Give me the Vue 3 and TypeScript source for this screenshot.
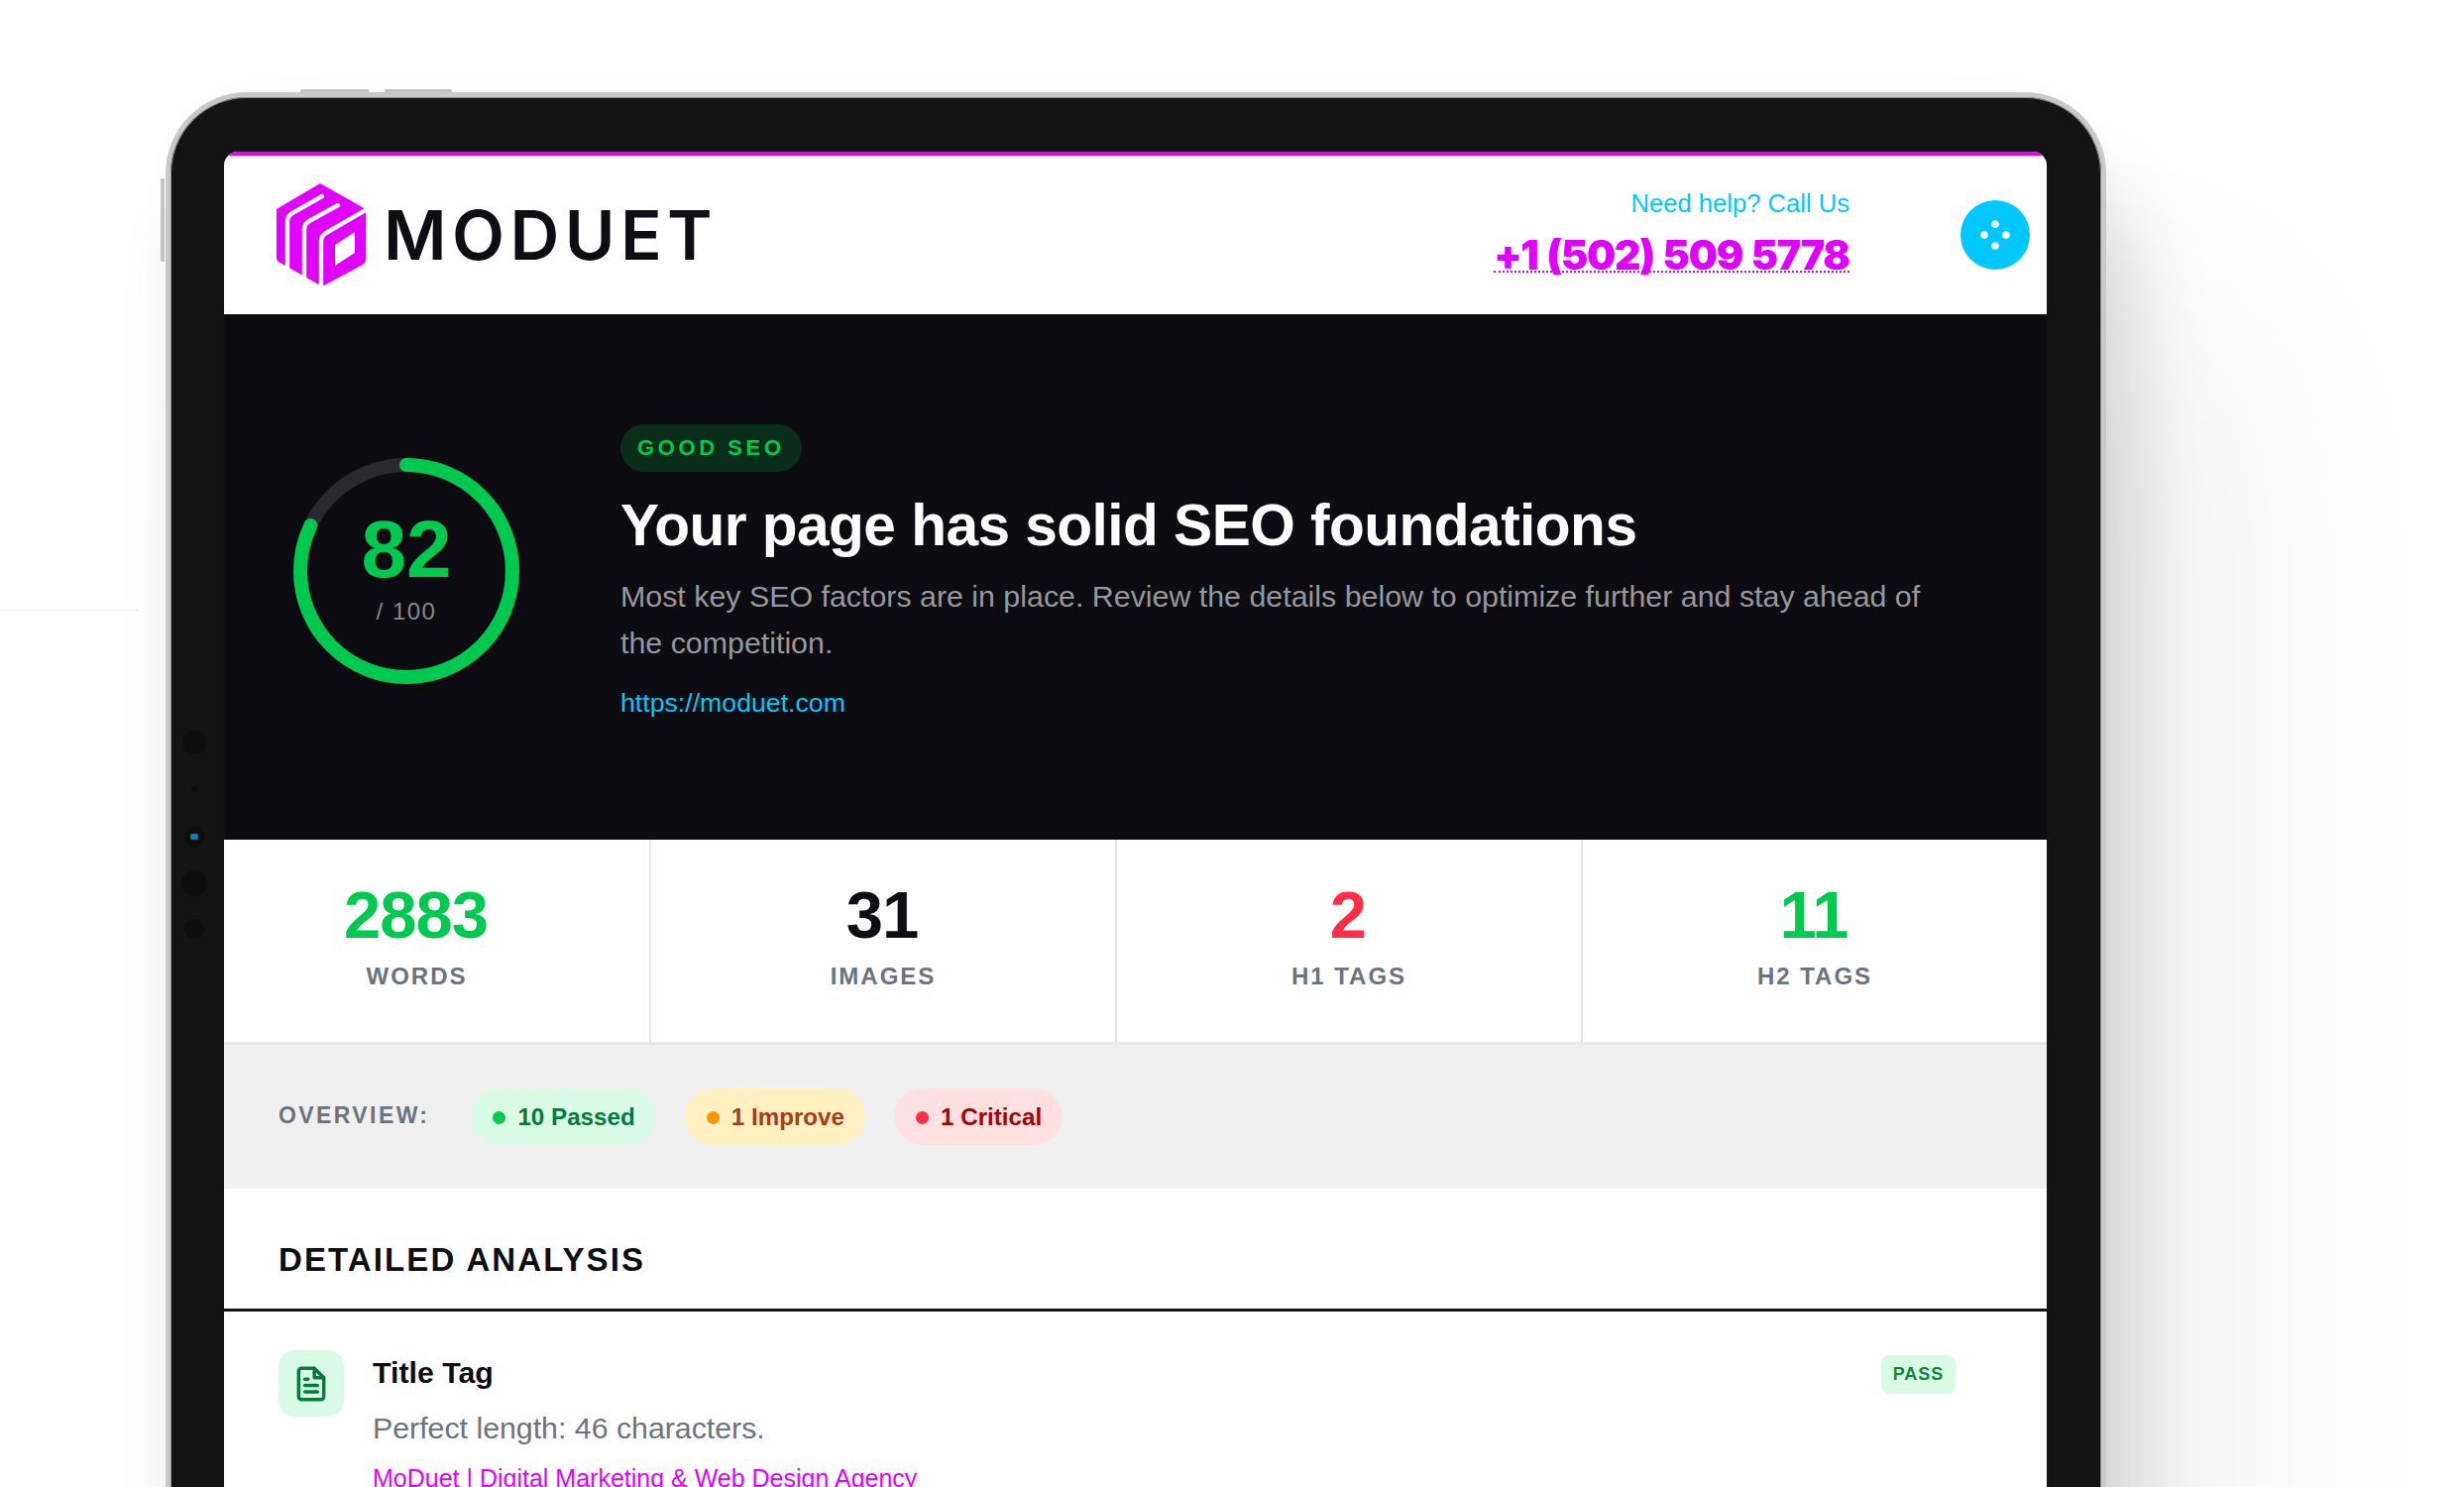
<template>
  <div class="page">
    <div class="rule"></div>
    <div class="device">
      <span class="btn-top btn-top--a"></span>
      <span class="btn-top btn-top--b"></span>
      <span class="btn-side"></span>
      <div class="sensors">
        <span class="sensor sensor--a"></span>
        <span class="sensor sensor--b"></span>
        <span class="sensor sensor--c"><i></i></span>
        <span class="sensor sensor--d"></span>
        <span class="sensor sensor--e"></span>
      </div>

      <div class="screen">
        <header class="topbar">
          <div class="brand">
            <svg class="brand__mark" viewBox="0 0 92 104">
              <path fill="#e100ff" d="M45 0 L91 26 L91 77 Q91 80 88 82 L47 104 L3 79 Q1 78 1 75 L1 26 Z" />
              <g fill="none" stroke="#fff" stroke-width="4.4" stroke-linecap="round" stroke-linejoin="round">
                <path d="M12 92 L12 38 Q12 33 17 30 L47 13" />
                <path d="M29 104 L29 46 Q29 41 34 38 L63 22" />
                <path d="M46 110 L46 58 Q46 53 51 50 L96 24" />
              </g>
              <path fill="#fff" d="M60 62 L80 49 L80 70 L60 83 Z" />
            </svg>
            <span class="brand__name">MODUET</span>
          </div>
          <div class="topbar__right">
            <div class="contact">
              <span class="contact__label">Need help? Call Us</span>
              <a class="contact__phone">+1 (502) 509 5778</a>
            </div>
            <div class="menu-dot">
              <svg viewBox="0 0 30 30" width="30" height="30" fill="#fff">
                <circle cx="15" cy="4" r="3.8" />
                <circle cx="4" cy="15" r="3.8" />
                <circle cx="26" cy="15" r="3.8" />
                <circle cx="15" cy="26" r="3.8" />
              </svg>
            </div>
          </div>
        </header>

        <section class="hero">
          <div class="gauge">
            <svg viewBox="0 0 228 228" width="228" height="228">
              <circle cx="114" cy="114" :r="radius" fill="none" stroke="#2a2a2e" stroke-width="14" />
              <circle
                cx="114"
                cy="114"
                :r="radius"
                fill="none"
                stroke="#00c94f"
                stroke-width="14"
                stroke-linecap="round"
                :stroke-dasharray="dash"
                transform="rotate(-90 114 114)"
              />
            </svg>
            <div class="gauge__text">
              <span class="gauge__score">{{ score }}</span>
              <span class="gauge__max">/ 100</span>
            </div>
          </div>
          <div class="hero__copy">
            <span class="hero__badge">GOOD SEO</span>
            <h1 class="hero__title">Your page has solid SEO foundations</h1>
            <p class="hero__desc">
              Most key SEO factors are in place. Review the details below to optimize further and stay ahead of the competition.
            </p>
            <a class="hero__url">https://moduet.com</a>
          </div>
        </section>

        <section class="stats">
          <div v-for="s in stats" :key="s.label" class="stat">
            <span class="stat__value" :class="'stat__value--' + s.tone">{{ s.value }}</span>
            <span class="stat__label">{{ s.label }}</span>
          </div>
        </section>

        <section class="overview">
          <span class="overview__label">OVERVIEW:</span>
          <span class="pill pill--pass"><i></i>10 Passed</span>
          <span class="pill pill--warn"><i></i>1 Improve</span>
          <span class="pill pill--crit"><i></i>1 Critical</span>
        </section>

        <h2 class="section-title">DETAILED ANALYSIS</h2>

        <div class="item">
          <div class="item__icon">
            <svg viewBox="0 0 24 24" width="38" height="38" fill="none" stroke="#067a3a" stroke-width="2.2" stroke-linecap="round" stroke-linejoin="round">
              <path d="M14 2H6a2 2 0 0 0-2 2v16a2 2 0 0 0 2 2h12a2 2 0 0 0 2-2V8z" />
              <path d="M14 2v6h6" />
              <path d="M16 13H8" />
              <path d="M16 17H8" />
              <path d="M10 9H8" />
            </svg>
          </div>
          <div class="item__body">
            <h3 class="item__title">Title Tag</h3>
            <p class="item__text">Perfect length: 46 characters.</p>
            <a class="item__link">MoDuet | Digital Marketing &amp; Web Design Agency</a>
          </div>
          <span class="item__tag">PASS</span>
        </div>
      </div>
    </div>
  </div>
</template>

<script setup lang="ts">
const score = 82
const radius = 107
const circumference = 2 * Math.PI * radius
const dash = `${circumference * (score / 100)} ${circumference}`

const stats = [
  { value: '2883', label: 'WORDS', tone: 'good' },
  { value: '31', label: 'IMAGES', tone: 'plain' },
  { value: '2', label: 'H1 TAGS', tone: 'bad' },
  { value: '11', label: 'H2 TAGS', tone: 'good' },
]
</script>

<style>
html,
body {
  margin: 0;
  overflow: hidden;
  background: #fff;
}
</style>

<style scoped>
.page {
  position: relative;
  height: 1500px;
  overflow: hidden;
  padding: 93px 0 0 167px;
  box-sizing: border-box;
  background: #fff;
  font-family: "Liberation Sans", Arial, sans-serif;
}

.rule {
  position: absolute;
  left: 0;
  top: 615px;
  width: 140px;
  height: 1px;
  background: #eee;
}

.device {
  position: relative;
  width: 1958px;
  height: 1600px;
  box-sizing: border-box;
  padding: 55px 55px 0 54px;
  background: #141414;
  border: 5px solid #c9c9cb;
  border-radius: 82px;
  box-shadow: inset 0 0 0 1px #8e8e90, 30px 90px 80px rgba(0, 0, 0, 0.13), 140px 220px 220px rgba(0, 0, 0, 0.06), 0 0 90px rgba(0, 0, 0, 0.012);
}

.btn-top {
  position: absolute;
  top: -8px;
  height: 3px;
  background: #c0c0c2;
  border-radius: 2px 2px 0 0;
}

.btn-top--a {
  left: 131px;
  width: 69px;
}

.btn-top--b {
  left: 216px;
  width: 68px;
}

.btn-side {
  position: absolute;
  left: -10px;
  top: 82px;
  width: 4px;
  height: 84px;
  background: #c4c4c6;
  border-radius: 2px 0 0 2px;
}

.sensors {
  position: absolute;
  left: 24px;
  top: 651px;
  width: 0;
}

.sensor {
  position: absolute;
  display: block;
  border-radius: 50%;
  background: #0e0e0e;
  transform: translate(-50%, -50%);
}

.sensor--a {
  top: 0;
  width: 24px;
  height: 24px;
}

.sensor--b {
  top: 47px;
  width: 6px;
  height: 6px;
}

.sensor--c {
  top: 95px;
  width: 20px;
  height: 20px;
  display: flex;
  align-items: center;
  justify-content: center;
}

.sensor--c i {
  width: 8px;
  height: 6px;
  background: #0f7fb0;
  border-radius: 2px;
}

.sensor--d {
  top: 142px;
  width: 26px;
  height: 26px;
}

.sensor--e {
  top: 188px;
  width: 20px;
  height: 20px;
}

.screen {
  background: #fff;
  border-radius: 14px 14px 0 0;
  overflow: hidden;
  height: 1400px;
}

.topbar {
  display: flex;
  align-items: center;
  justify-content: space-between;
  height: 164px;
  box-sizing: border-box;
  border-top: 4px solid #e100ff;
  padding: 0 17px 0 52px;
}

.brand {
  display: flex;
  align-items: center;
  gap: 17px;
}

.brand__mark {
  width: 92px;
  height: 104px;
  display: block;
}

.brand__name {
  font-family: Inter, "Liberation Sans", sans-serif;
  font-size: 69px;
  font-weight: 600;
  letter-spacing: 5.4px;
  line-height: 1;
  color: #0d0d14;
}

.topbar__right {
  display: flex;
  align-items: center;
  gap: 112px;
}

.contact {
  display: flex;
  flex-direction: column;
  align-items: flex-end;
  gap: 18px;
  margin-top: -12px;
}

.contact__label {
  font-size: 25.6px;
  line-height: 36px;
  color: #00c8ff;
}

.contact__phone {
  font-family: Inter, "Liberation Sans", sans-serif;
  font-size: 41px;
  font-weight: 900;
  line-height: 32px;
  letter-spacing: -1.2px;
  word-spacing: 1.6px;
  color: #e100ff;
  border-bottom: 2px dotted #e100ff;
}

.menu-dot {
  width: 70px;
  height: 70px;
  border-radius: 50%;
  background: #00c8ff;
  display: flex;
  align-items: center;
  justify-content: center;
}

.hero {
  display: flex;
  align-items: center;
  gap: 102px;
  height: 530px;
  box-sizing: border-box;
  padding: 0 70px 12px;
  background: #0c0c12;
}

.gauge {
  position: relative;
  width: 228px;
  height: 228px;
  flex: none;
}

.gauge svg {
  display: block;
}

.gauge__text {
  position: absolute;
  inset: 0;
  display: flex;
  flex-direction: column;
  align-items: center;
  justify-content: center;
}

.gauge__score {
  font-size: 82px;
  font-weight: 700;
  line-height: 80px;
  color: #00c94f;
  margin-top: -8px;
}

.gauge__max {
  font-size: 24px;
  line-height: 28px;
  letter-spacing: 1.5px;
  color: #88888c;
  margin-top: 9px;
}

.hero__copy {
  display: flex;
  flex-direction: column;
  align-items: flex-start;
}

.hero__badge {
  box-sizing: border-box;
  height: 48px;
  padding: 0 17px;
  border-radius: 24px;
  background: #0a2e1b;
  color: #00c94f;
  font-size: 22px;
  font-weight: 700;
  line-height: 48px;
  letter-spacing: 3.6px;
}

.hero__title {
  margin: 18px 0 0;
  font-size: 58.67px;
  font-weight: 700;
  line-height: 72px;
  letter-spacing: -0.56px;
  color: #fff;
}

.hero__desc {
  margin: 12px 0 0;
  font-size: 30.37px;
  line-height: 47.5px;
  color: #98989c;
  max-width: 1340px;
}

.hero__url {
  margin-top: 20px;
  font-size: 26.7px;
  line-height: 32px;
  color: #00c8ff;
}

.stats {
  display: grid;
  grid-template-columns: 431px 470px 470px 1fr;
  height: 207px;
  box-sizing: border-box;
  border-bottom: 3px solid #e6e6ea;
}

.stat {
  display: flex;
  flex-direction: column;
  align-items: center;
  justify-content: center;
  border-right: 2px solid #e6e6ea;
}

.stat:first-child {
  padding-right: 40px;
}

.stat:last-child {
  border-right: 0;
}

.stat__value {
  font-size: 67px;
  font-weight: 700;
  line-height: 74px;
  letter-spacing: -1px;
  margin: -13.5px 0 0 -2px;
}

.stat__value--good {
  color: #00c94f;
}

.stat__value--plain {
  color: #0d0d14;
}

.stat__value--bad {
  color: #ff2d46;
}

.stat__label {
  margin-top: 11.5px;
  font-size: 24px;
  font-weight: 700;
  line-height: 28px;
  letter-spacing: 2px;
  color: #6b7280;
}

.overview {
  display: flex;
  align-items: center;
  height: 145px;
  box-sizing: border-box;
  padding-left: 55px;
  background: #efefef;
}

.overview__label {
  font-size: 23px;
  font-weight: 700;
  letter-spacing: 2.4px;
  color: #6b7280;
  margin-right: 42px;
  margin-top: -3px;
}

.pill {
  display: flex;
  align-items: center;
  gap: 12px;
  height: 57px;
  box-sizing: border-box;
  padding: 1px 21px 0 22px;
  margin-right: 29px;
  border-radius: 29px;
  font-size: 24.2px;
  font-weight: 700;
}

.pill i {
  width: 13px;
  height: 13px;
  border-radius: 50%;
}

.pill--pass {
  background: #d9fbe6;
  color: #067a3a;
}

.pill--pass i {
  background: #00c94f;
}

.pill--warn {
  background: #fff0c2;
  color: #a33f14;
}

.pill--warn i {
  background: #ff9800;
}

.pill--crit {
  background: #ffe0e0;
  color: #a30008;
}

.pill--crit i {
  background: #ff2d46;
}

.section-title {
  margin: 0;
  padding: 51px 55px 28px;
  border-bottom: 3px solid #141418;
  font-size: 33px;
  font-weight: 700;
  line-height: 42px;
  letter-spacing: 2.1px;
  color: #0d0d14;
}

.item {
  display: flex;
  align-items: flex-start;
  padding: 39px 92px 0 55px;
}

.item__icon {
  flex: none;
  width: 66px;
  height: 67px;
  border-radius: 16px;
  background: #d9fbe6;
  display: flex;
  align-items: center;
  justify-content: center;
}

.item__body {
  flex: 1;
  margin-left: 29px;
}

.item__title {
  margin: 4px 0 0;
  font-size: 30.3px;
  font-weight: 700;
  line-height: 38px;
  color: #0d0d14;
}

.item__text {
  margin: 18px 0 0;
  font-size: 30.3px;
  line-height: 38px;
  color: #6b7280;
}

.item__link {
  display: block;
  margin-top: 15px;
  font-size: 25px;
  line-height: 32px;
  color: #e100ff;
}

.item__tag {
  flex: none;
  height: 39px;
  width: 75px;
  margin-top: 5px;
  border-radius: 8px;
  background: #d9fbe6;
  color: #0a8a3e;
  font-size: 18px;
  font-weight: 700;
  line-height: 39px;
  letter-spacing: 1px;
  text-align: center;
}
</style>
